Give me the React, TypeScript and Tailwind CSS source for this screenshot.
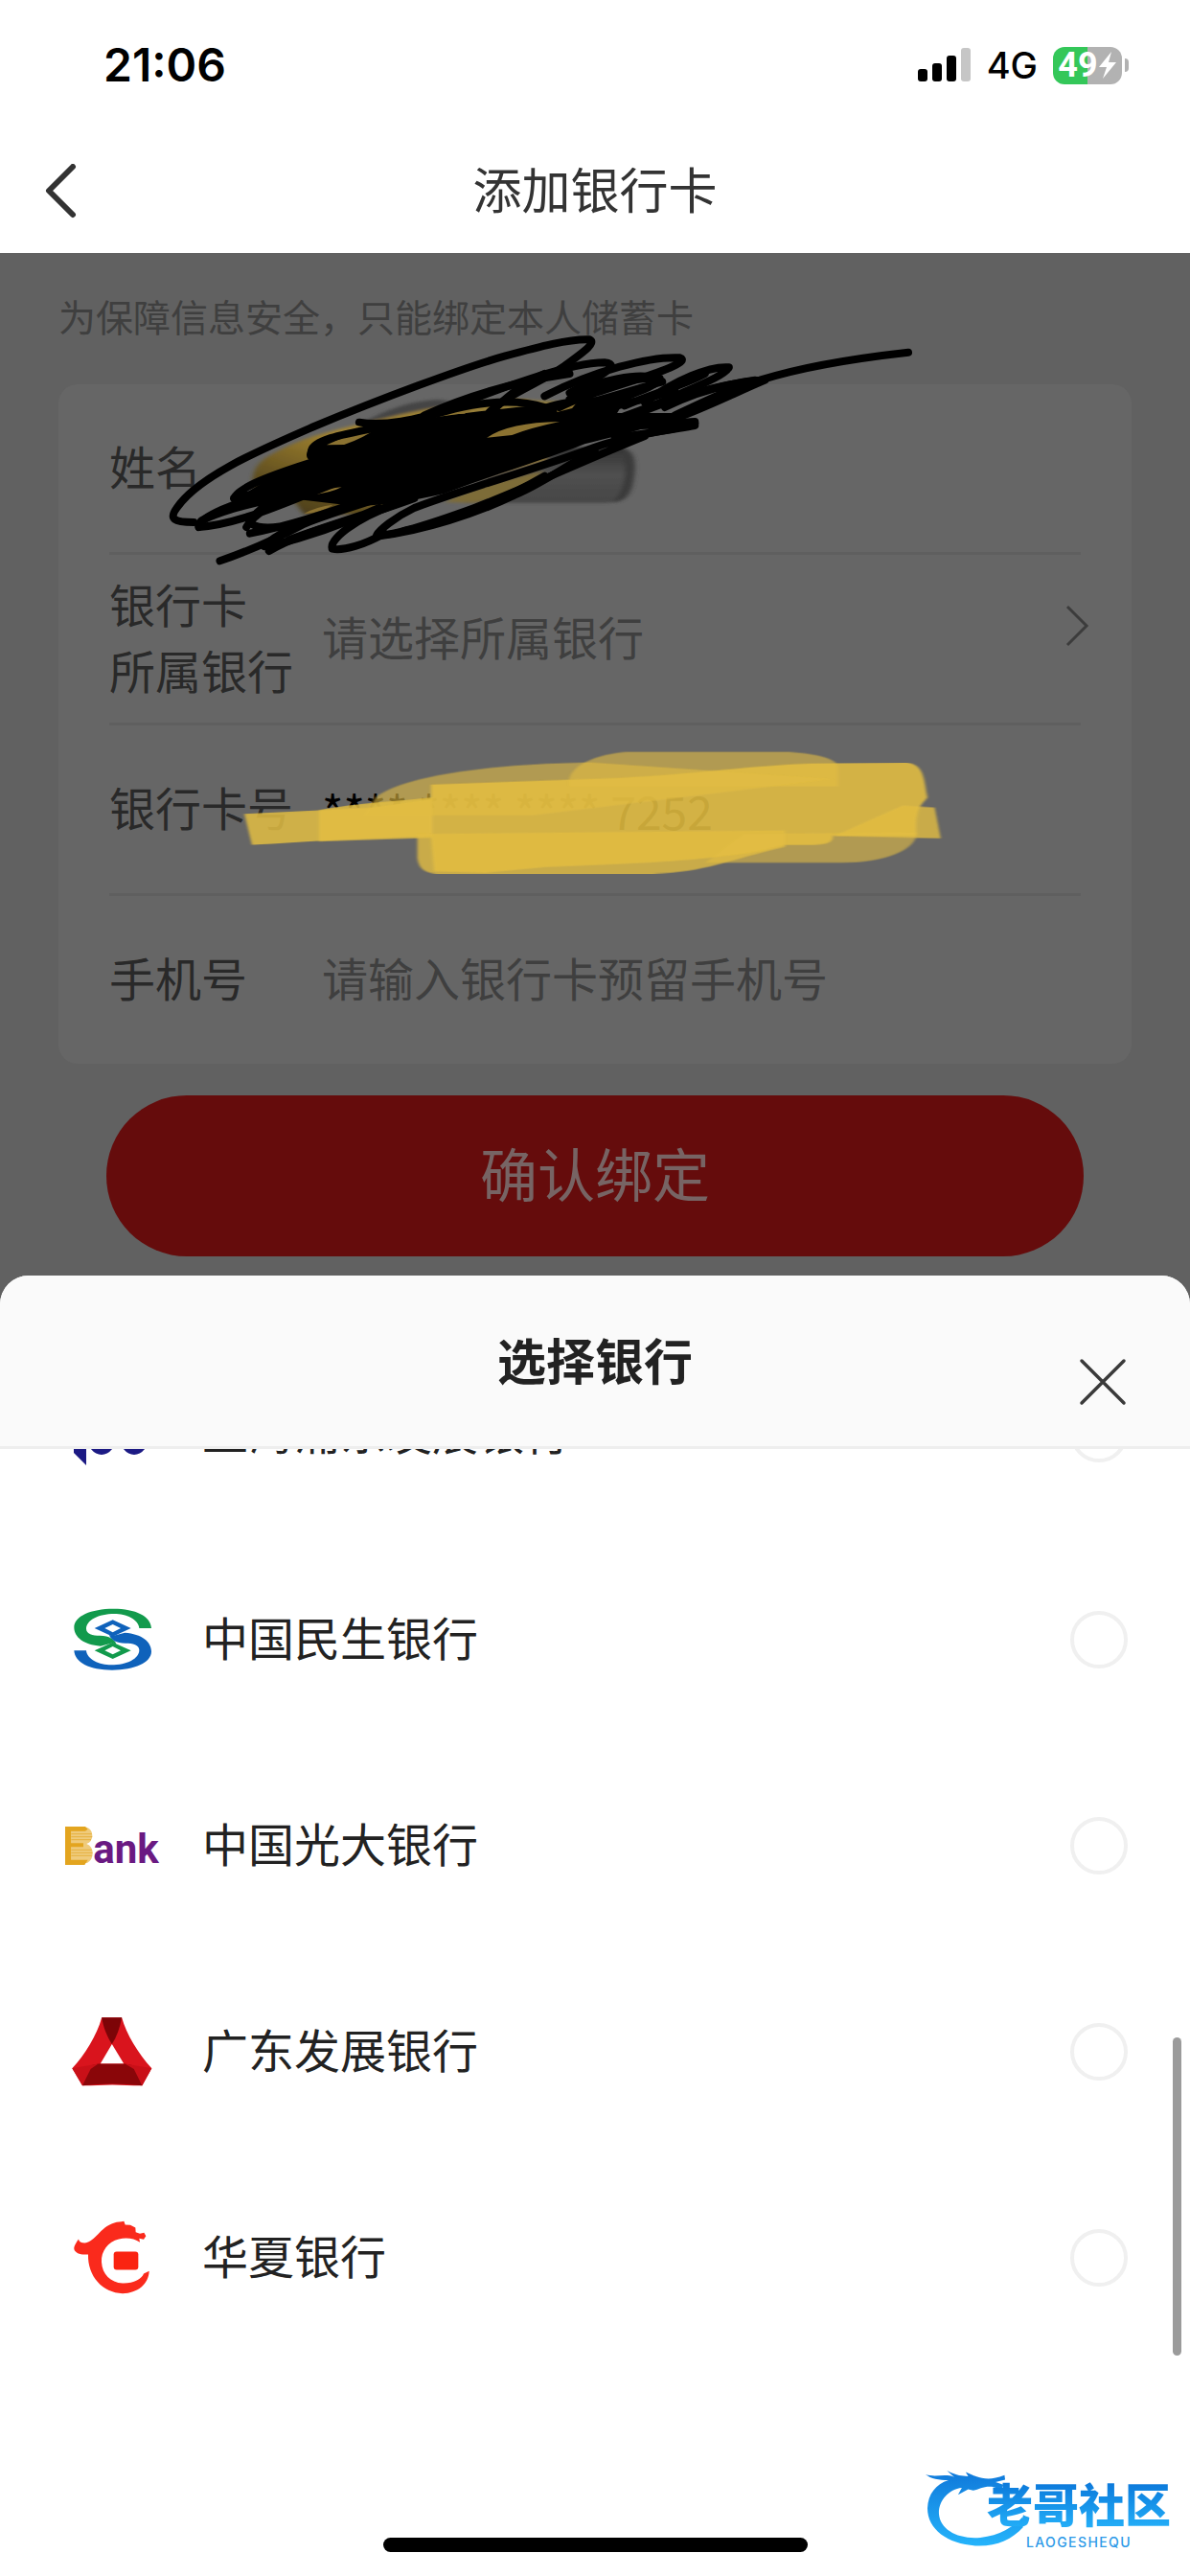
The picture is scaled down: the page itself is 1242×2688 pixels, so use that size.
import React, { useState } from 'react';

interface Bank {
  id: string;
  name: string;
  logo: React.ReactNode;
}

const SpdLogo = () => (
  <svg viewBox="0 0 84 66" className="w-[84px] h-[66px]" fill="#1c1a84">
    <path d="M2 8h13v58L2 53z" />
    <ellipse cx="31" cy="36" rx="15" ry="19" />
    <ellipse cx="65" cy="36" rx="15" ry="19" />
  </svg>
);

const MinshengHalf = ({ color }: { color: string }) => (
  <>
    <path
      fill={color}
      d="M324 118H286C284 90 245 73 208 73C158 73 120 93 120 120C120 136 140 141 163 141C192 142 210 152 214 168L203 164L165 174C112 170 82 146 82 115C82 80 135 57 205 57C275 57 322 80 324 118Z"
    />
    <path fill={color} fillRule="evenodd" d="M203 162L260 188L203 214L146 188ZM203 175L178 188L203 200L228 188Z" />
  </>
);

const MinshengLogo = () => (
  <svg viewBox="78 52 249 201" className="w-[83px] h-[67px]">
    <MinshengHalf color="#129a4c" />
    <g transform="rotate(180 203 153)">
      <MinshengHalf color="#0f62bb" />
    </g>
  </svg>
);

const EverbrightLogo = () => (
  <div className="flex items-end">
    <svg viewBox="57 80 87 120" className="w-[29px] h-[40px]">
      <path fill="#efcb7c" d="M76 82H124Q142 88 142 108Q142 128 124 134Q143 142 143 164Q143 184 126 194H76Z" />
      <path fill="#e3a51f" d="M57 80H120L128 88L120 94H76V132H114V144H76V184H128L118 200H57Z" />
      <path stroke="#e3a51f" strokeWidth="2" d="M76 103H140M76 112H142M76 121H138M76 153H140M76 162H143M76 171H140" />
    </svg>
    <span className="font-['Roboto','Liberation_Sans',sans-serif] text-[42px] leading-[32px] font-bold text-[#6a1a82]">
      ank
    </span>
  </div>
);

const GuangfaLogo = () => (
  <svg viewBox="47 75 253 222" className="w-[84px] h-[74px]">
    <path fill="#d9141d" d="M141 78H204C218 130 255 190 298 238L268 292H80L48 238C88 195 125 135 141 78Z" />
    <path fill="#7d0407" d="M141 78H204C198 110 188 138 173 162C158 138 146 110 141 78Z" />
    <path fill="#8a0609" d="M130 224H214L240 229L268 292Q174 282 80 292L106 229Z" />
    <path fill="#c91018" d="M48 238L130 224L106 240L80 292ZM298 238L214 224L242 240L268 292Z" />
    <path fill="#fff" d="M173 162L210 223H137ZM80 298Q174 282 268 298Z" />
  </svg>
);

const HuaxiaLogo = () => (
  <svg viewBox="42 54 246 230" className="w-[82px] h-[77px]">
    <path
      fill="#fa2a1c"
      d="M60 112C61 120 68 124 80 124C115 118 125 76 172 61C182 58 192 58 202 56L206 67L222 68L238 76L239 90L252 95L265 92L271 102L264 113L250 110L252 122C235 110 210 106 186 112C152 120 130 150 132 184C134 222 160 248 198 250C232 251 258 236 264 220L281 212C280 252 245 282 198 282C135 280 88 228 90 160C75 160 58 160 50 150C42 142 46 132 60 112Z"
    />
    <rect x="170" y="151" width="77" height="57" rx="9" fill="#fa2411" />
  </svg>
);

const banks: Bank[] = [
  { id: 'spdb', name: '上海浦东发展银行', logo: <SpdLogo /> },
  { id: 'cmbc', name: '中国民生银行', logo: <MinshengLogo /> },
  { id: 'ceb', name: '中国光大银行', logo: <EverbrightLogo /> },
  { id: 'cgb', name: '广东发展银行', logo: <GuangfaLogo /> },
  { id: 'hxb', name: '华夏银行', logo: <HuaxiaLogo /> },
];

const StatusBar = () => (
  <div className="flex h-[136px] items-center justify-between pl-[108px] pr-[64px] text-black">
    <span className="text-[48px] leading-[56px] font-semibold">21:06</span>
    <div className="flex items-center">
      <svg viewBox="0 0 56 36" className="mr-[16px] h-[36px] w-[56px]">
        <rect x="0" y="22" width="10" height="13" rx="3" />
        <rect x="15" y="16" width="10" height="19" rx="3" />
        <rect x="30" y="8" width="10" height="27" rx="3" />
        <rect x="45" y="0" width="10" height="35" rx="3" fill="#c6c6c6" />
      </svg>
      <span className="mr-[16px] text-[38px] leading-[48px] font-medium">4G</span>
      <div className="flex h-[39px] w-[72px] items-center justify-center rounded-[12px] bg-linear-to-r from-[#34c759] from-50% to-[#b2b2b2] to-50% text-white">
        <span className="font-['Roboto',sans-serif] text-[36px] leading-[39px] font-bold">49</span>
        <svg viewBox="0 0 20 28" className="h-[28px] w-[20px]" fill="currentColor">
          <path d="M14 0L1 16H9L5 28L19 11H11Z" />
        </svg>
      </div>
      <div className="ml-[3px] h-[14px] w-[4px] rounded-r-full bg-[#b2b2b2]" />
    </div>
  </div>
);

const penStrokes = [
  'M100 645C60 645 50 635 66 600C110 500 230 420 340 345C470 260 640 160 720 125C790 95 850 70 890 73C905 85 870 120 840 155C790 210 730 240 690 300',
  'M610 290C700 230 850 145 920 145C955 150 910 190 850 240',
  'M560 310C660 240 760 200 850 180M800 250C900 170 1010 125 1070 130C1090 140 1040 170 980 200C900 240 860 260 830 285',
  'M850 260C920 215 980 190 1030 195C1030 215 980 240 900 290',
  'M860 235C920 200 980 180 1010 190M880 275C960 240 1010 215 1035 205M700 290C740 230 770 200 800 180',
  'M1000 270C1060 200 1130 155 1168 160C1160 185 1110 215 1060 250C1020 280 980 300 930 330',
  'M960 280C1020 240 1080 215 1120 180M900 300C960 270 1010 260 1060 230',
  'M1526 113C1400 135 1300 165 1230 200C1130 215 1040 270 960 320M1240 200C1180 240 1130 280 1070 315C1020 330 960 330 900 350',
  'M1220 200C1150 215 1090 245 1040 285M1200 215C1150 240 1110 275 1060 310M940 315H1070',
  'M430 332C480 345 540 325 620 290C700 260 760 265 800 285',
  'M335 420C340 380 420 365 510 335M340 440L520 370',
  'M1100 330C1050 335 1000 345 940 345M1100 342C1050 355 1000 370 940 380',
  'M1100 335C1090 350 980 365 900 410C780 480 640 540 540 600C500 630 470 670 465 685C500 690 590 640 660 600C760 540 850 470 1000 375',
  'M480 680C440 715 400 735 376 728C370 700 420 635 500 590',
  'M470 688C560 670 660 620 740 560C800 520 840 470 900 420M520 672C600 650 700 590 800 500',
  'M152 766C200 740 260 700 320 650C400 600 500 560 560 520M250 735C320 670 420 640 540 570',
  'M180 570C190 540 230 510 330 460M180 570L300 530M110 660C105 640 160 590 250 560',
  'M110 660C200 650 300 570 420 500M205 660C220 620 250 590 300 570M212 680C280 660 380 610 430 580M300 650C260 665 230 665 215 650M240 720C280 660 340 640 400 600',
  'M115 640C160 605 210 590 260 570M210 650C225 600 260 570 330 540M250 720C330 690 400 650 470 600M290 700C360 660 430 625 500 590',
];

// Pen strokes covering the card holder name
const NameScribble = () => (
  <svg
    viewBox="0 0 1568 810"
    preserveAspectRatio="none"
    className="pointer-events-none absolute top-[66px] left-[150px] h-[270px] w-[820px]"
    fill="none"
    stroke="#000"
    strokeWidth="8"
    strokeLinecap="round"
    strokeLinejoin="round"
  >
    <defs>
      <linearGradient id="smudge" x1="0" y1="0" x2="0" y2="1">
        <stop offset="0" stopColor="#333" />
        <stop offset="0.5" stopColor="#505050" />
        <stop offset="1" stopColor="#454545" />
      </linearGradient>
      <linearGradient id="gold" x1="0" y1="1" x2="1" y2="0">
        <stop offset="0" stopColor="#3a3015" />
        <stop offset="0.5" stopColor="#a58631" />
        <stop offset="1" stopColor="#8b773c" />
      </linearGradient>
      <filter id="soft">
        <feGaussianBlur stdDeviation="5" />
      </filter>
    </defs>
    <g stroke="none" filter="url(#soft)">
      <path fill="#444" d="M440 330C500 280 550 262 590 262C620 264 650 290 660 330Z" />
      <path fill="url(#smudge)" d="M700 410H950C985 420 982 460 978 510C972 560 962 584 920 584H640Z" />
      <path fill="#3b3b3b" d="M955 420C985 425 982 470 978 510C974 560 960 582 935 582C965 540 965 460 955 420Z" />
      <path fill="url(#gold)" d="M218 540C215 480 225 455 270 420C330 370 400 350 480 320C580 280 680 262 760 262L870 270L800 450L600 540L430 620L320 620L300 580Z" />
      <path fill="#7d6c38" d="M600 582Q680 520 800 484Q750 560 660 584Z" />
    </g>
    <path
      fill="#000"
      stroke="none"
      d="M330 410C370 385 450 355 520 330C640 300 720 290 800 275C850 250 900 245 960 265L940 315L1010 345C960 370 930 380 880 400C800 450 700 495 600 555C520 585 440 600 400 590L290 570L180 575L250 510L330 450C322 440 325 425 330 410Z"
    />
    <g stroke="none" fill="#8b7231">
      <path d="M600 308Q640 282 668 284L640 305ZM685 380Q730 332 830 330Q770 350 735 372ZM365 403Q410 368 465 350Q440 380 400 402ZM335 560Q355 540 395 535Q375 552 335 560ZM320 618Q345 595 378 590Q355 615 320 618ZM690 266Q740 250 775 262L730 268ZM825 290L868 264L855 288L825 300Z" />
    </g>
    {penStrokes.map((d) => (
      <path key={d} d={d} vectorEffect="non-scaling-stroke" />
    ))}
  </svg>
);

// Highlighter strokes over the card number
const NumberHighlight = () => (
  <svg
    viewBox="303 104 960 353"
    preserveAspectRatio="none"
    className="pointer-events-none absolute top-[516px] left-[240px] h-[135px] w-[760px]"
    fill="#e2bd42"
  >
    <defs>
      <filter id="edge">
        <feGaussianBlur stdDeviation="2" />
      </filter>
    </defs>
    <g filter="url(#edge)">
      <path opacity="0.6" d="M750 210C745 150 790 122 825 116H1040C1080 122 1105 135 1105 160V210Z" />
      <path opacity="0.6" d="M495 240C540 170 680 147 780 145L1100 190L700 290H480Z" />
      <path opacity="0.85" d="M322 285L420 275C470 255 530 250 570 240V345C500 350 400 360 332 370Z" />
      <path opacity="0.8" d="M1190 262L1232 268L1240 352L1100 345Z" />
      <path opacity="0.6" d="M1209 335C1208 385 1165 418 1110 418H930L980 340Z" />
      <path opacity="0.8" d="M550 340V405C552 435 560 448 580 448H860C930 445 960 410 1035 375V330Z" />
      <path opacity="0.88" d="M490 268L568 245V205L800 188C900 180 980 155 1060 148L1195 145C1215 150 1218 175 1222 240C1220 255 1205 258 1208 345H1098C1098 365 1090 370 1060 370H1035C990 400 900 418 720 430L640 446L572 442L568 350L420 360V275Z" />
    </g>
  </svg>
);

const labelClass = 'w-[222px] shrink-0 text-[48px] leading-[69px] text-[#292929]';

const BindCardForm = () => (
  <form className="relative px-[61px]" onSubmit={(e) => e.preventDefault()}>
    <p className="pt-[38px] pb-[39px] text-[39px] leading-[60px] text-[#3f3f3f]">为保障信息安全，只能绑定本人储蓄卡</p>
    <div className="rounded-[20px] bg-[#666666] px-[53px]">
      <div className="flex h-[178px] items-center border-b-[3px] border-[#5f5f5f]">
        <label htmlFor="holder" className={labelClass}>姓名</label>
        <input id="holder" className="h-[69px] min-w-0 flex-1 bg-transparent text-[48px] outline-none" />
      </div>
      <div className="flex h-[178px] items-center border-b-[3px] border-[#5f5f5f]">
        <span className={labelClass}>
          银行卡
          <br />
          所属银行
        </span>
        <button type="button" className="flex flex-1 items-center justify-between text-left text-[48px] leading-[69px] text-[#3f3f3f]">
          请选择所属银行
          <svg viewBox="0 0 26 44" className="mb-[28px] -mr-[9px] h-[44px] w-[26px]" fill="none" stroke="#3c3c3c" strokeWidth="3">
            <path d="M3 2L23 22L3 42" />
          </svg>
        </button>
      </div>
      <div className="flex h-[178px] items-center border-b-[3px] border-[#5f5f5f]">
        <label htmlFor="cardNo" className={labelClass}>银行卡号</label>
        <input
          id="cardNo"
          defaultValue="**** **** **** 7252"
          className="h-[69px] min-w-0 flex-1 bg-transparent font-['Noto_Sans_CJK_SC',sans-serif] text-[48px] text-black outline-none"
        />
      </div>
      <div className="flex h-[175px] items-center">
        <label htmlFor="phone" className={labelClass}>手机号</label>
        <input
          id="phone"
          placeholder="请输入银行卡预留手机号"
          className="h-[69px] min-w-0 flex-1 bg-transparent text-[48px] outline-none placeholder:text-[#3f3f3f]"
        />
      </div>
    </div>
    <div className="px-[50px] pt-[33px] pb-[20px]">
      <button type="submit" className="h-[168px] w-full rounded-full bg-[#650c0c] text-[60px] leading-[80px] text-[#776464]">
        确认绑定
      </button>
    </div>
  </form>
);

const BankSheet = () => {
  const [selected, setSelected] = useState<string | null>(null);

  return (
    <section className="relative flex flex-1 flex-col overflow-hidden rounded-t-[30px] bg-white">
      <header className="relative z-10 flex h-[181px] items-center justify-center border-b-[3px] border-[#eeeeee] bg-[#fafafa] pt-[4px]">
        <h2 className="text-[51px] leading-[72px] font-bold text-[#222]">选择银行</h2>
        <button type="button" aria-label="关闭" className="absolute top-[86px] right-[66px]">
          <svg viewBox="0 0 50 50" className="h-[50px] w-[50px]" fill="none" stroke="#3a3a3a" strokeWidth="3.5" strokeLinecap="round">
            <path d="M3 3L47 47M47 3L3 47" />
          </svg>
        </button>
      </header>
      <ul className="-mt-[124px]">
        {banks.map((bank) => (
          <li key={bank.id}>
            <label className="flex h-[215px] items-center pr-[65px] pl-[61px]">
              <span className="flex w-[112px] shrink-0 justify-center">{bank.logo}</span>
              <span className="ml-[38px] flex-1 text-[48px] leading-[69px] text-[#222]">{bank.name}</span>
              <input
                type="radio"
                name="bank"
                checked={selected === bank.id}
                onChange={() => setSelected(bank.id)}
                className="h-[60px] w-[60px] appearance-none rounded-full border-[4px] border-[#f0f0f0] bg-white checked:bg-[#e1251b]"
              />
            </label>
          </li>
        ))}
      </ul>
      <div className="absolute top-[795px] right-[9px] h-[332px] w-[9px] rounded-full bg-[#9b9b9b]" />
    </section>
  );
};

const Watermark = () => (
  <div className="absolute right-[20px] bottom-[26px] flex h-[92px] w-[256px] justify-end">
    <svg viewBox="78 30 310 270" className="absolute top-0 left-0 h-[90px] w-[103px]">
      <defs>
        <linearGradient id="dragon" x1="0" y1="0" x2="0" y2="1">
          <stop offset="0" stopColor="#0f78da" />
          <stop offset="1" stopColor="#25b4fb" />
        </linearGradient>
      </defs>
      <path
        fill="url(#dragon)"
        d="M78 66C110 76 140 62 168 74L145 54C180 72 190 70 212 72L204 58L236 72C262 80 285 84 326 68L328 82L298 90L322 98L318 114L286 104C260 102 246 112 228 116L212 112L180 130L192 108C150 112 118 150 120 190C124 240 180 270 250 264C310 258 355 230 384 198V232C350 270 300 292 240 290C150 286 84 240 84 172C86 128 110 96 150 84C120 84 95 80 78 66Z"
      />
    </svg>
    <div className="relative mt-[16px] flex flex-col items-center">
      <span className="bg-linear-to-b from-[#0c74d8] to-[#27b5fb] bg-clip-text text-[48px] leading-[58px] font-black text-transparent">
        老哥社区
      </span>
      <span className="text-[14px] leading-[18px] font-medium tracking-widest text-[#2d9ae8]">LAOGESHEQU</span>
    </div>
  </div>
);

const App: React.FC = () => {
  return (
    <div className="relative flex min-h-screen flex-col bg-white font-['Inter','Noto_Sans_CJK_SC',sans-serif]">
      <StatusBar />
      <nav className="grid h-[128px] grid-cols-[1fr_auto_1fr] items-center px-[46px]">
        <button type="button" aria-label="返回" className="justify-self-start">
          <svg viewBox="0 0 36 58" className="h-[58px] w-[36px]" fill="none" stroke="#333" strokeWidth="6" strokeLinecap="round" strokeLinejoin="round">
            <path d="M30 3L5 28L30 53" />
          </svg>
        </button>
        <h1 className="text-[51px] leading-[72px] text-[#333]">添加银行卡</h1>
      </nav>
      <main className="relative flex flex-1 flex-col bg-[#616161]">
        <BindCardForm />
        <NameScribble />
        <NumberHighlight />
        <BankSheet />
      </main>
      <Watermark />
      <div className="absolute inset-x-0 bottom-[25px] mx-auto h-[15px] w-[443px] rounded-full bg-black" />
    </div>
  );
};

export default App;
